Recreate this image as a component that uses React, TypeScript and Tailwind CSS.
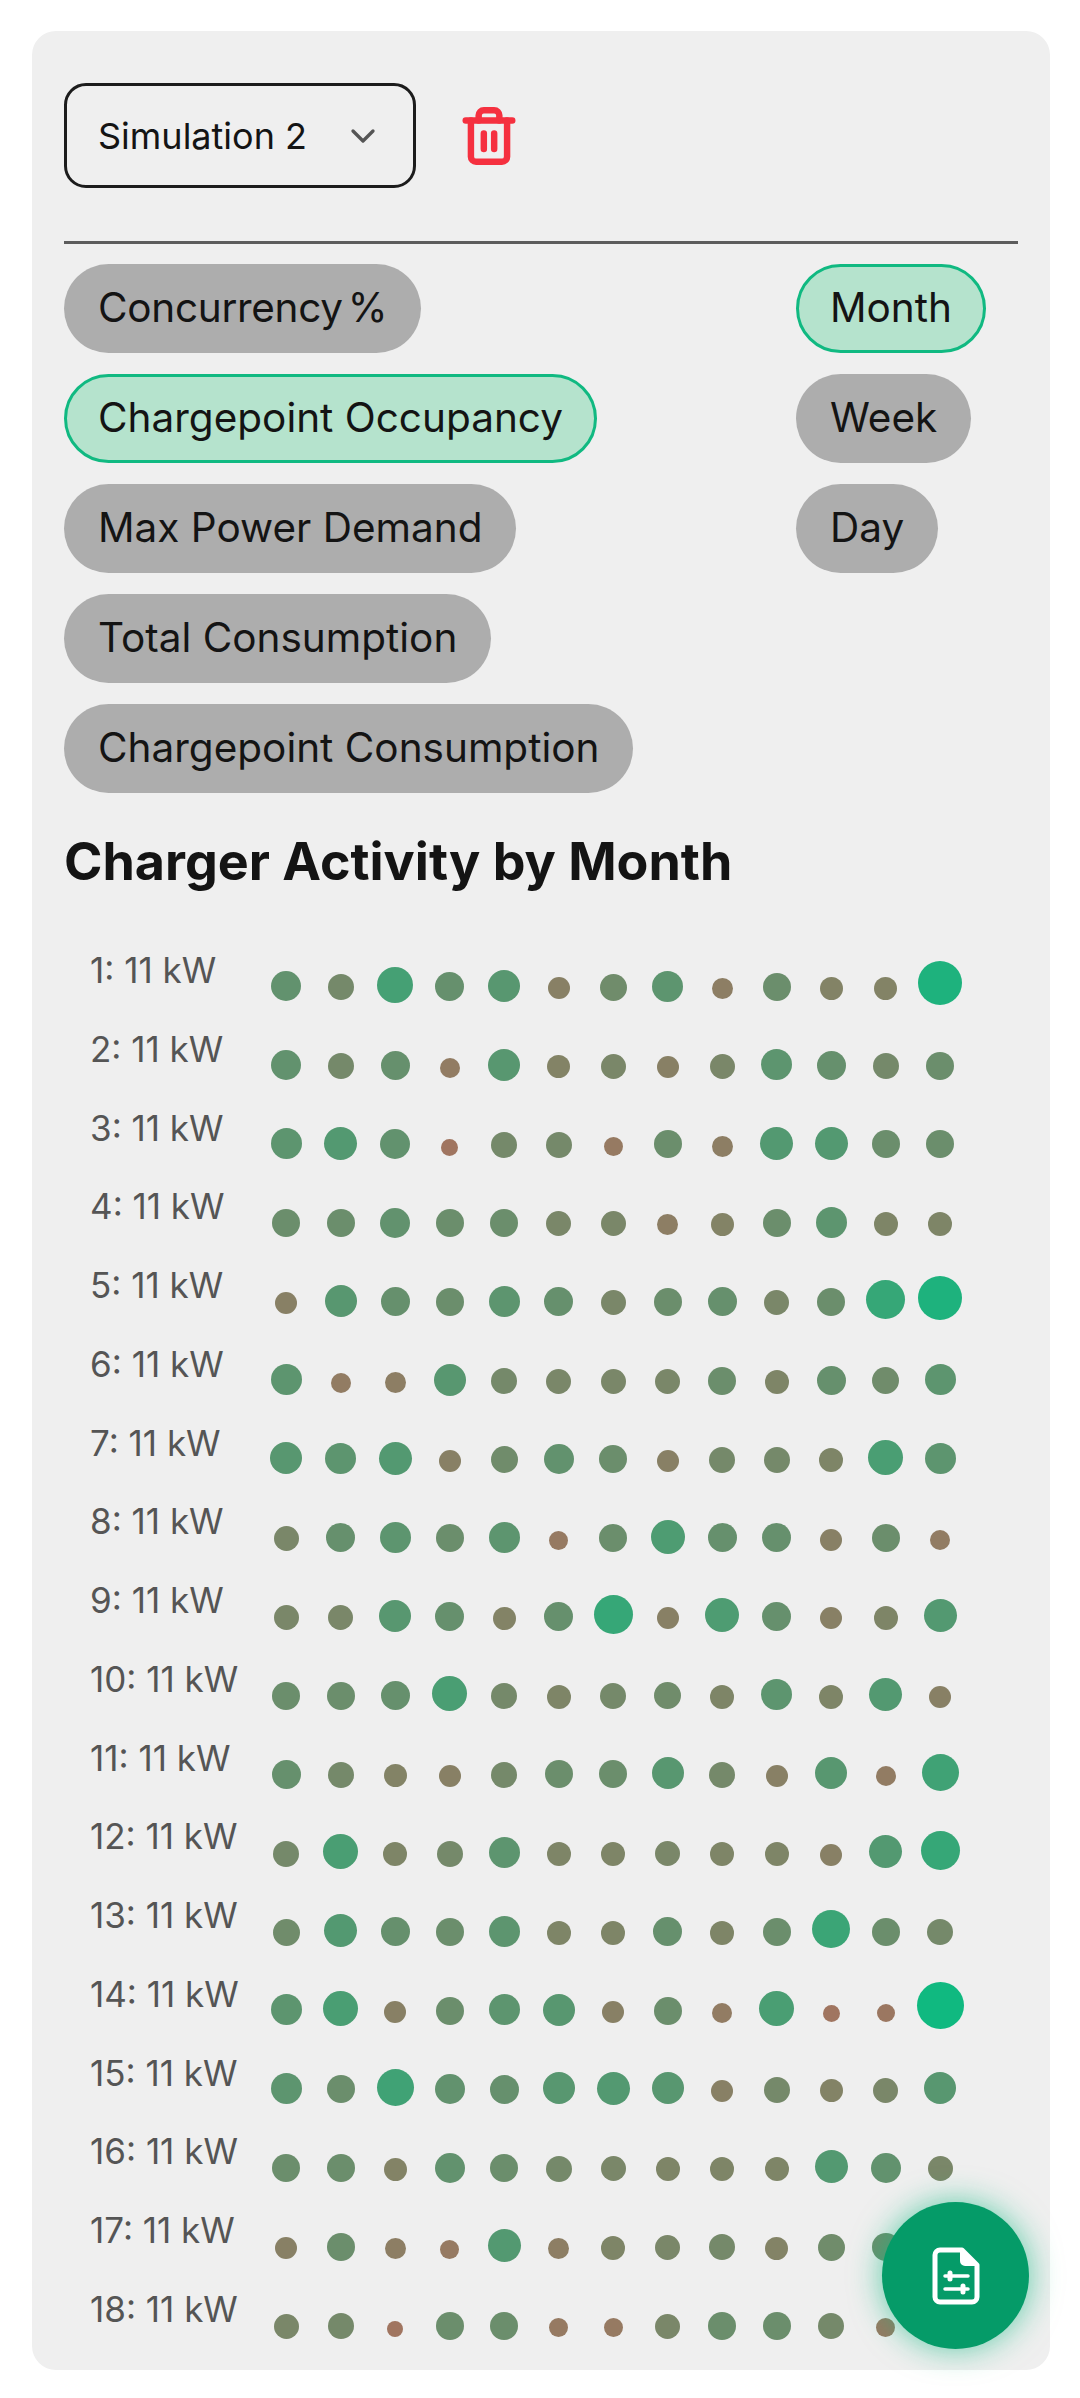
import { ChevronDown, Trash2 } from 'lucide-react';

const METRICS = [
  { label: 'Concurrency %', tight: true },
  { label: 'Chargepoint Occupancy', active: true },
  { label: 'Max Power Demand' },
  { label: 'Total Consumption' },
  { label: 'Chargepoint Consumption' },
];

const RANGES = [
  { label: 'Month', active: true },
  { label: 'Week' },
  { label: 'Day' },
];

// dot diameters per charger, one row per chargepoint
const ROWS = [
  [30, 26, 36, 29, 32, 22, 27, 31, 21, 28, 23, 23, 44],
  [30, 26, 29, 20, 32, 23, 25, 22, 25, 31, 29, 26, 28],
  [31, 33, 30, 17, 26, 26, 19, 28, 21, 33, 33, 28, 28],
  [28, 28, 30, 28, 28, 25, 25, 21, 23, 28, 31, 24, 24],
  [22, 32, 29, 28, 31, 29, 25, 28, 29, 25, 28, 39, 44],
  [31, 20, 21, 32, 26, 25, 25, 25, 28, 24, 29, 27, 31],
  [32, 31, 33, 22, 27, 30, 28, 22, 26, 26, 24, 35, 31],
  [25, 29, 31, 28, 31, 19, 28, 34, 29, 29, 22, 28, 20],
  [25, 25, 32, 29, 23, 29, 39, 22, 34, 29, 22, 24, 33],
  [28, 28, 29, 35, 26, 24, 26, 27, 24, 31, 24, 33, 22],
  [29, 26, 23, 22, 26, 28, 28, 32, 26, 22, 32, 20, 37],
  [26, 35, 24, 26, 31, 24, 24, 25, 24, 24, 22, 33, 39],
  [27, 33, 29, 28, 31, 24, 24, 29, 24, 28, 38, 28, 26],
  [31, 35, 22, 28, 31, 32, 22, 28, 20, 35, 17, 18, 47],
  [31, 28, 37, 30, 29, 32, 33, 32, 22, 26, 23, 25, 32],
  [28, 28, 23, 30, 28, 26, 25, 24, 24, 24, 33, 30, 25],
  [22, 28, 21, 19, 33, 21, 24, 25, 26, 23, 27, 28, 26],
  [25, 26, 16, 28, 28, 19, 19, 25, 28, 28, 26, 19, 20],
];

const dotColor = (d: number) => {
  const t = Math.min(1, Math.max(0, (d - 17) / 30));
  const r = Math.round(160 - 144 * t);
  const g = Math.round(117 + 68 * t);
  const b = Math.round(96 + 32 * t);
  return `rgb(${r}, ${g}, ${b})`;
};

function Pill({ label, active, tight }: { label: string; active?: boolean; tight?: boolean }) {
  return (
    <button
      className={
        active
          ? 'h-[89px] px-[31px] rounded-[45px] border-[3px] border-[#10b981] bg-[#b5e3cd] text-[40.5px] text-[#141414] whitespace-nowrap'
          : tight
            ? 'h-[89px] px-[34px] rounded-[45px] bg-[#adadad] text-[40.5px] text-[#141414] whitespace-nowrap [word-spacing:-6px] tracking-[-0.3px]'
            : 'h-[89px] px-[34px] rounded-[45px] bg-[#adadad] text-[40.5px] text-[#141414] whitespace-nowrap'
      }
    >
      {label}
    </button>
  );
}

function FileSettingsIcon() {
  return (
    <svg viewBox="0 0 48 58" className="w-[48px] h-[58px]" fill="none" stroke="white" strokeWidth="5" strokeLinecap="round" strokeLinejoin="round">
      <path d="M8 3h22l15 15v32a5 5 0 0 1-5 5H8a5 5 0 0 1-5-5V8a5 5 0 0 1 5-5z" />
      <path d="M29 4v10a4 4 0 0 0 4 4h11z" fill="white" strokeWidth="2" />
      <path d="M13 29h23M13 42h23" strokeWidth="3.5" />
      <path d="M18 26v6M31 39v6" strokeWidth="5" />
    </svg>
  );
}

export default function App() {
  return (
    <div className="relative h-[2398px] w-[1080px] overflow-hidden bg-white font-['Inter',sans-serif]">
      <div className="absolute left-[32px] top-[31px] h-[2339px] w-[1018px] overflow-hidden rounded-[24px] bg-[#efefef] px-[32px] pt-[52px]">
        {/* Simulation picker */}
        <div className="flex items-center gap-[42px]">
          <div className="flex h-[105px] w-[352px] items-center justify-between rounded-[22px] border-[3px] border-[#1c1c1c] pl-[31px] pr-[30px]">
            <span className="text-[36px] text-[#141414]">Simulation 2</span>
            <ChevronDown className="h-[40px] w-[40px] text-[#555555]" strokeWidth={2} />
          </div>
          <Trash2 className="h-[62px] w-[62px] text-[#f5303f]" strokeWidth={2.5} />
        </div>

        <div className="mt-[53px] h-[3px] bg-[#5c5c5c]" />

        {/* Metric and range filters */}
        <div className="mt-[20px] flex justify-between">
          <div className="flex flex-col items-start gap-[21px]">
            {METRICS.map(m => (
              <Pill key={m.label} label={m.label} active={m.active} tight={m.tight} />
            ))}
          </div>
          <div className="flex w-[222px] flex-col items-start gap-[21px]">
            {RANGES.map(r => (
              <Pill key={r.label} label={r.label} active={r.active} />
            ))}
          </div>
        </div>

        <h2 className="mt-[39px] h-[60px] whitespace-nowrap text-[52px] font-bold leading-[60px] text-[#141414]">Charger Activity by Month</h2>

        {/* Dot matrix */}
        <div className="mt-[55px] flex flex-col">
          {ROWS.map((row, i) => (
            <div key={i} className="flex h-[78.75px] items-center">
              <div className="mb-[32px] ml-[26px] w-[169px] shrink-0 whitespace-nowrap text-[35px] text-[#555555]">{i + 1}: 11 kW</div>
              <div className="flex">
                {row.map((d, j) => (
                  <div key={j} className="flex h-[60px] w-[54.5px] items-center justify-center">
                    <div
                      className="rounded-full"
                      style={{ width: d, height: d, backgroundColor: dotColor(d), marginTop: (30 - d) * 0.5 }}
                    />
                  </div>
                ))}
              </div>
            </div>
          ))}
        </div>
      </div>

      <button className="absolute left-[882px] top-[2202px] flex h-[147px] w-[147px] items-center justify-center rounded-full bg-[#059b68] shadow-[0_0_32px_rgba(16,185,129,0.65)]">
        <FileSettingsIcon />
      </button>
    </div>
  );
}
